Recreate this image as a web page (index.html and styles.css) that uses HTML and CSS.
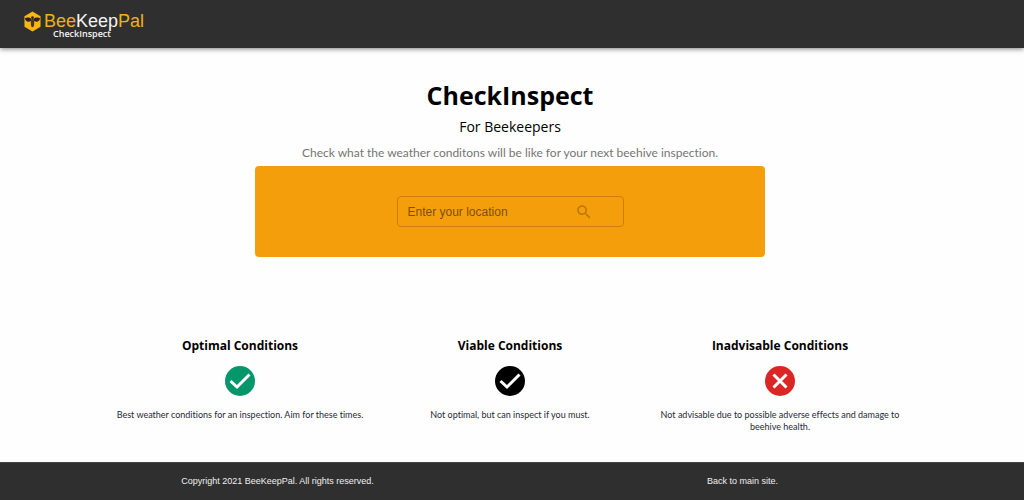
FILE: index.html
```
<!DOCTYPE html>
<html lang="en">
<head>
  <meta charset="UTF-8" />
  <meta name="viewport" content="width=device-width, initial-scale=1.0"/>
  <title>BeeKeepPal CheckInspect</title>
  <link rel="stylesheet" href="styles.css">
</head>
<body>

  <header>
    <a class="logo" href="#">
      <svg class="logo-mark" viewBox="0 0 18 22" aria-hidden="true">
        <path fill="#fbb514" d="M9 0.5 L17.5 5.5 V16.5 L9 21.5 L0.5 16.5 V5.5 Z"/>
        <path fill="#2b2618" d="M8 8.500 C6 6.500 3 6.500 1 7.500 C1.500 11 4 12 7.500 10.500 Z M10 8.500 C12 6.500 15 6.500 17 7.500 C16.500 11 14 12 10.500 10.500 Z"/>
        <circle fill="#2b2618" cx="9" cy="7" r="1.500"/>
        <ellipse fill="#4a3a18" cx="9" cy="12.500" rx="1.800" ry="4.500"/>
      </svg>
      <span class="logo-text">
        <span class="logo-name">Bee<span>Keep</span>Pal</span>
        <span class="logo-sub">CheckInspect</span>
      </span>
    </a>
  </header>

  <main>
    <section class="intro">
      <h1>CheckInspect</h1>
      <h2>For Beekeepers</h2>
      <p>Check what the weather conditons will be like for your next beehive inspection.</p>
    </section>

    <!-- Location search -->
    <form class="search">
      <div class="search-field">
        <input type="text" id="location" aria-label="Enter your location" placeholder="Enter your location">
        <button type="button" aria-label="Search">
          <svg viewBox="0 0 24 24"><path d="M15.500 14h-.79l-.28-.27C15.410 12.590 16 11.110 16 9.500 16 5.910 13.090 3 9.500 3S3 5.910 3 9.500 5.910 16 9.500 16c1.610 0 3.090-.59 4.230-1.570l.27.28v.79l5 4.990L20.490 19l-4.990-5zm-6 0C7.010 14 5 11.990 5 9.500S7.010 5 9.500 5 14 7.010 14 9.500 11.990 14 9.500 14z"/></svg>
        </button>
      </div>
    </form>

    <!-- Condition key -->
    <section class="conditions">
      <div class="condition optimal">
        <h3>Optimal Conditions</h3>
        <svg viewBox="0 0 30 30" aria-hidden="true">
          <circle cx="15" cy="15" r="15"/>
          <path d="M5.500 15 L12 21 L24.500 8.500"/>
        </svg>
        <p>Best weather conditions for an inspection. Aim for these times.</p>
      </div>
      <div class="condition viable">
        <h3>Viable Conditions</h3>
        <svg viewBox="0 0 30 30" aria-hidden="true">
          <circle cx="15" cy="15" r="15"/>
          <path d="M5.500 15 L12 21 L24.500 8.500"/>
        </svg>
        <p>Not optimal, but can inspect if you must.</p>
      </div>
      <div class="condition inadvisable">
        <h3>Inadvisable Conditions</h3>
        <svg viewBox="0 0 30 30" aria-hidden="true">
          <circle cx="15" cy="15" r="15"/>
          <path d="M8.500 8.500 L21.500 21.500 M21.500 8.500 L8.500 21.500"/>
        </svg>
        <p>Not advisable due to possible adverse effects and damage to beehive health.</p>
      </div>
    </section>
  </main>

  <footer>
    <div class="footer-inner">
      <p>Copyright 2021 BeeKeepPal. All rights reserved.</p>
      <p><a href="#">Back to main site.</a></p>
    </div>
  </footer>

</body>
</html>
```
FILE: styles.css
```
* {
  box-sizing: border-box;
}

body {
  margin: 0;
  min-height: 100vh;
  display: flex;
  flex-direction: column;
  font-family: "Open Sans", "Noto Sans", sans-serif;
  font-variant-ligatures: none;
  background: #fefefe;
  color: #000;
}

h1, h2, h3, p {
  margin: 0;
}

header {
  height: 48px;
  padding: 11px 24px;
  background: #2f2f2f;
  box-shadow: 0 1px 5px rgba(0, 0, 0, 0.5);
}

.logo {
  display: inline-flex;
  gap: 3px;
  text-decoration: none;
}

.logo-mark {
  width: 17px;
  height: 21px;
}

.logo-text {
  display: flex;
  flex-direction: column;
}

.logo-name {
  font: 18px/20px "Liberation Sans", Arial, sans-serif;
  color: #f0b01c;
}

.logo-name span {
  color: #f4f4f4;
}

.logo-sub {
  padding-left: 9px;
  font-size: 9px;
  line-height: 6px;
  font-weight: 600;
  color: #f4f4f4;
}

main {
  flex: 1;
  padding: 28px 4px 28px 0;
}

.intro {
  text-align: center;
}

h1 {
  font-size: 25px;
  line-height: 38px;
}

h2 {
  font-size: 14px;
  line-height: 26px;
  font-weight: 400;
}

.intro p {
  font-family: Lato, "Open Sans", sans-serif;
  font-size: 12px;
  line-height: 26px;
  color: #757575;
}

.search {
  width: 50%;
  margin: 0 auto 80px;
  padding: 30px;
  display: flex;
  justify-content: center;
  background: #f59e0b;
  border-radius: 4px;
}

.search-field {
  display: flex;
  align-items: center;
  width: 227px;
  height: 31px;
  padding: 0 30px 0 10px;
  border: 1px solid #c98209;
  border-radius: 4px;
}

.search-field input {
  flex: 1;
  min-width: 0;
  padding: 0;
  border: none;
  outline: none;
  background: none;
  font: 12px "Liberation Sans", Arial, sans-serif;
  color: #6f4a0c;
}

.search-field input::placeholder {
  color: #7a500c;
  opacity: 1;
}

.search-field button {
  display: flex;
  padding: 0;
  border: none;
  background: none;
  cursor: pointer;
}

.search-field svg {
  width: 18px;
  height: 18px;
  fill: #b8770c;
}

.conditions {
  display: grid;
  grid-template-columns: repeat(3, 1fr);
  max-width: 810px;
  margin: 0 auto;
  text-align: center;
}

.condition h3 {
  font-size: 12px;
  line-height: 18px;
}

.condition svg {
  display: block;
  width: 30px;
  height: 30px;
  margin: 11px auto 13px;
}

.condition path {
  fill: none;
  stroke: #fff;
  stroke-width: 3;
}

.optimal circle {
  fill: #059669;
}

.inadvisable circle {
  fill: #dc2626;
}

.condition p {
  font-family: Lato, "Open Sans", sans-serif;
  font-size: 9px;
  line-height: 12px;
  color: #1f2937;
}

footer {
  padding: 12px 4px 12px 0;
  background: #2f2f2f;
  border-top: 1px solid #444;
}

.footer-inner {
  display: grid;
  grid-template-columns: 1fr 1fr;
  max-width: 930px;
  margin: 0 auto;
  text-align: center;
  font: 9px/13px "Liberation Sans", Arial, sans-serif;
  color: #f0f0f0;
}

footer a {
  color: inherit;
  text-decoration: none;
}
```
